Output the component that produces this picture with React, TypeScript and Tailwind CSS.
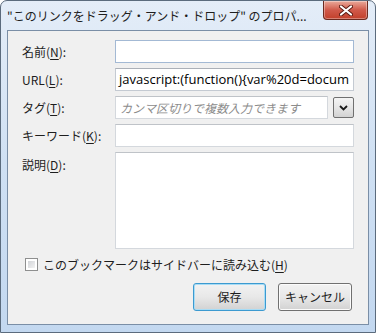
import React from "react";

const font = { fontFamily: '"Noto Sans CJK JP", "Noto Sans", sans-serif' };

function Label({ text, keyChar, tail = "):" }: { text: string; keyChar: string; tail?: string }) {
  return (
    <span className="text-[12px] text-[#1e1e1e] leading-none">
      {text}(<span className="underline underline-offset-2">{keyChar}</span>{tail}
    </span>
  );
}

function Row({ label, children, top = false }: { label: React.ReactNode; children: React.ReactNode; top?: boolean }) {
  return (
    <div className={`flex ${top ? "items-start" : "items-center"}`}>
      <div className={`w-[93px] shrink-0 text-[12px] leading-[17px] ${top ? "pt-[4px]" : ""}`}>{label}</div>
      <div className="flex-1 min-w-0 flex items-center gap-[5px]">{children}</div>
    </div>
  );
}

function CloseButton() {
  return (
    <div className="w-[45px] h-[19px] rounded-b-[4px] border border-t-0 border-[#6b2a20] bg-gradient-to-b from-[#e9a99b] via-[#d0594a] to-[#c23f2a] flex items-center justify-center shadow-[inset_0_0_0_1px_rgba(255,255,255,0.35)]">
      <svg width="14" height="11" viewBox="0 0 14 11">
        <path d="M2 1.5 L12 9.5 M12 1.5 L2 9.5" stroke="#5a1a12" strokeWidth="4" strokeLinecap="round" />
        <path d="M2 1.5 L12 9.5 M12 1.5 L2 9.5" stroke="#ffffff" strokeWidth="2.2" strokeLinecap="round" />
      </svg>
    </div>
  );
}

export default function App() {
  return (
    <div style={font} className="w-[376px] h-[333px] bg-white text-[12px]">
      <div className="w-[376px] h-[333px] rounded-t-[7px] border border-[#5b6b7d] bg-gradient-to-b from-[#e4edf8] via-[#cfe0f3] to-[#c3d8f0] flex flex-col overflow-hidden">
        <div className="h-[29px] shrink-0 flex items-start justify-between pl-[6px] pr-[7px]">
          <span className="mt-[6px] text-[12px] text-[#1e1e1e] whitespace-nowrap">"このリンクをドラッグ・アンド・ドロップ" のプロパ...</span>
          <CloseButton />
        </div>
        <div className="mx-[6px] mb-[7px] flex-1 border border-[#7a8ea6] bg-[#f0f0f0] flex flex-col pl-[14px] pr-[14px] pt-[9px]">
          <div className="flex flex-col gap-[5px]">
            <Row label={<Label text="名前" keyChar="N" />}>
              <div className="h-[23px] flex-1 bg-white border border-[#a3b9d4]" />
            </Row>
            <Row label={<Label text="URL" keyChar="L" />}>
              <div className="h-[23px] flex-1 min-w-0 bg-white border border-[#c4cad2] border-t-[#abb0b8] overflow-hidden flex items-center pl-[3px]">
                <span className="text-[13px] leading-[17px] text-black whitespace-nowrap" style={{ fontFamily: '"Open Sans", "Noto Sans", sans-serif' }}>
                  javascript:(function(){"{"}var%20d=docum
                </span>
              </div>
            </Row>
            <Row label={<Label text="タグ" keyChar="T" />}>
              <div className="h-[23px] flex-1 min-w-0 bg-white border border-[#d4d8dd] border-t-[#bfc3c8] flex items-center pl-[4px] overflow-hidden">
                <span className="text-[12px] leading-[17px] italic text-[#8c8c8c] whitespace-nowrap">カンマ区切りで複数入力できます</span>
              </div>
              <div className="w-[21px] h-[21px] shrink-0 rounded-[2px] border border-[#707070] bg-gradient-to-b from-[#f4f4f4] via-[#e6e6e6] to-[#d2d2d2] flex items-center justify-center">
                <svg width="9" height="6" viewBox="0 0 9 6">
                  <path d="M1 1 L4.5 4.5 L8 1" stroke="#1a1a1a" strokeWidth="1.8" fill="none" />
                </svg>
              </div>
            </Row>
            <Row label={<Label text="キーワード" keyChar="K" />}>
              <div className="h-[23px] flex-1 bg-white border border-[#d4d8dd] border-t-[#bfc3c8]" />
            </Row>
            <Row top label={<Label text="説明" keyChar="D" />}>
              <div className="h-[97px] flex-1 bg-white border border-[#d4d8dd] border-t-[#bfc3c8]" />
            </Row>
          </div>
          <div className="flex items-center mt-[7px] pl-[3px] gap-[5px] leading-[17px]">
            <div className="w-[13px] h-[13px] border border-[#8e8f8f] bg-white p-[2px]">
              <div className="w-full h-full bg-gradient-to-br from-[#d2d4d8] to-[#f2f2f2]" />
            </div>
            <span className="text-[12px] text-[#1e1e1e]">
              このブックマークはサイドバーに読み込む(<span className="underline underline-offset-2">H</span>)
            </span>
          </div>
          <div className="flex justify-end gap-[12px] mt-[10px] pr-[2px]">
            <div className="w-[73px] h-[28px] rounded-[3px] border border-[#3c9ad0] shadow-[inset_0_0_0_1px_#a8dcf5] bg-gradient-to-b from-[#f2f2f2] via-[#e8e8e8] to-[#d2d2d2] flex items-center justify-center">
              <span className="text-[12px] text-[#1e1e1e]">保存</span>
            </div>
            <div className="w-[74px] h-[28px] rounded-[3px] border border-[#707070] shadow-[inset_0_0_0_1px_#fbfbfb] bg-gradient-to-b from-[#f2f2f2] via-[#e8e8e8] to-[#d2d2d2] flex items-center justify-center">
              <span className="text-[12px] text-[#1e1e1e]">キャンセル</span>
            </div>
          </div>
        </div>
      </div>
    </div>
  );
}
